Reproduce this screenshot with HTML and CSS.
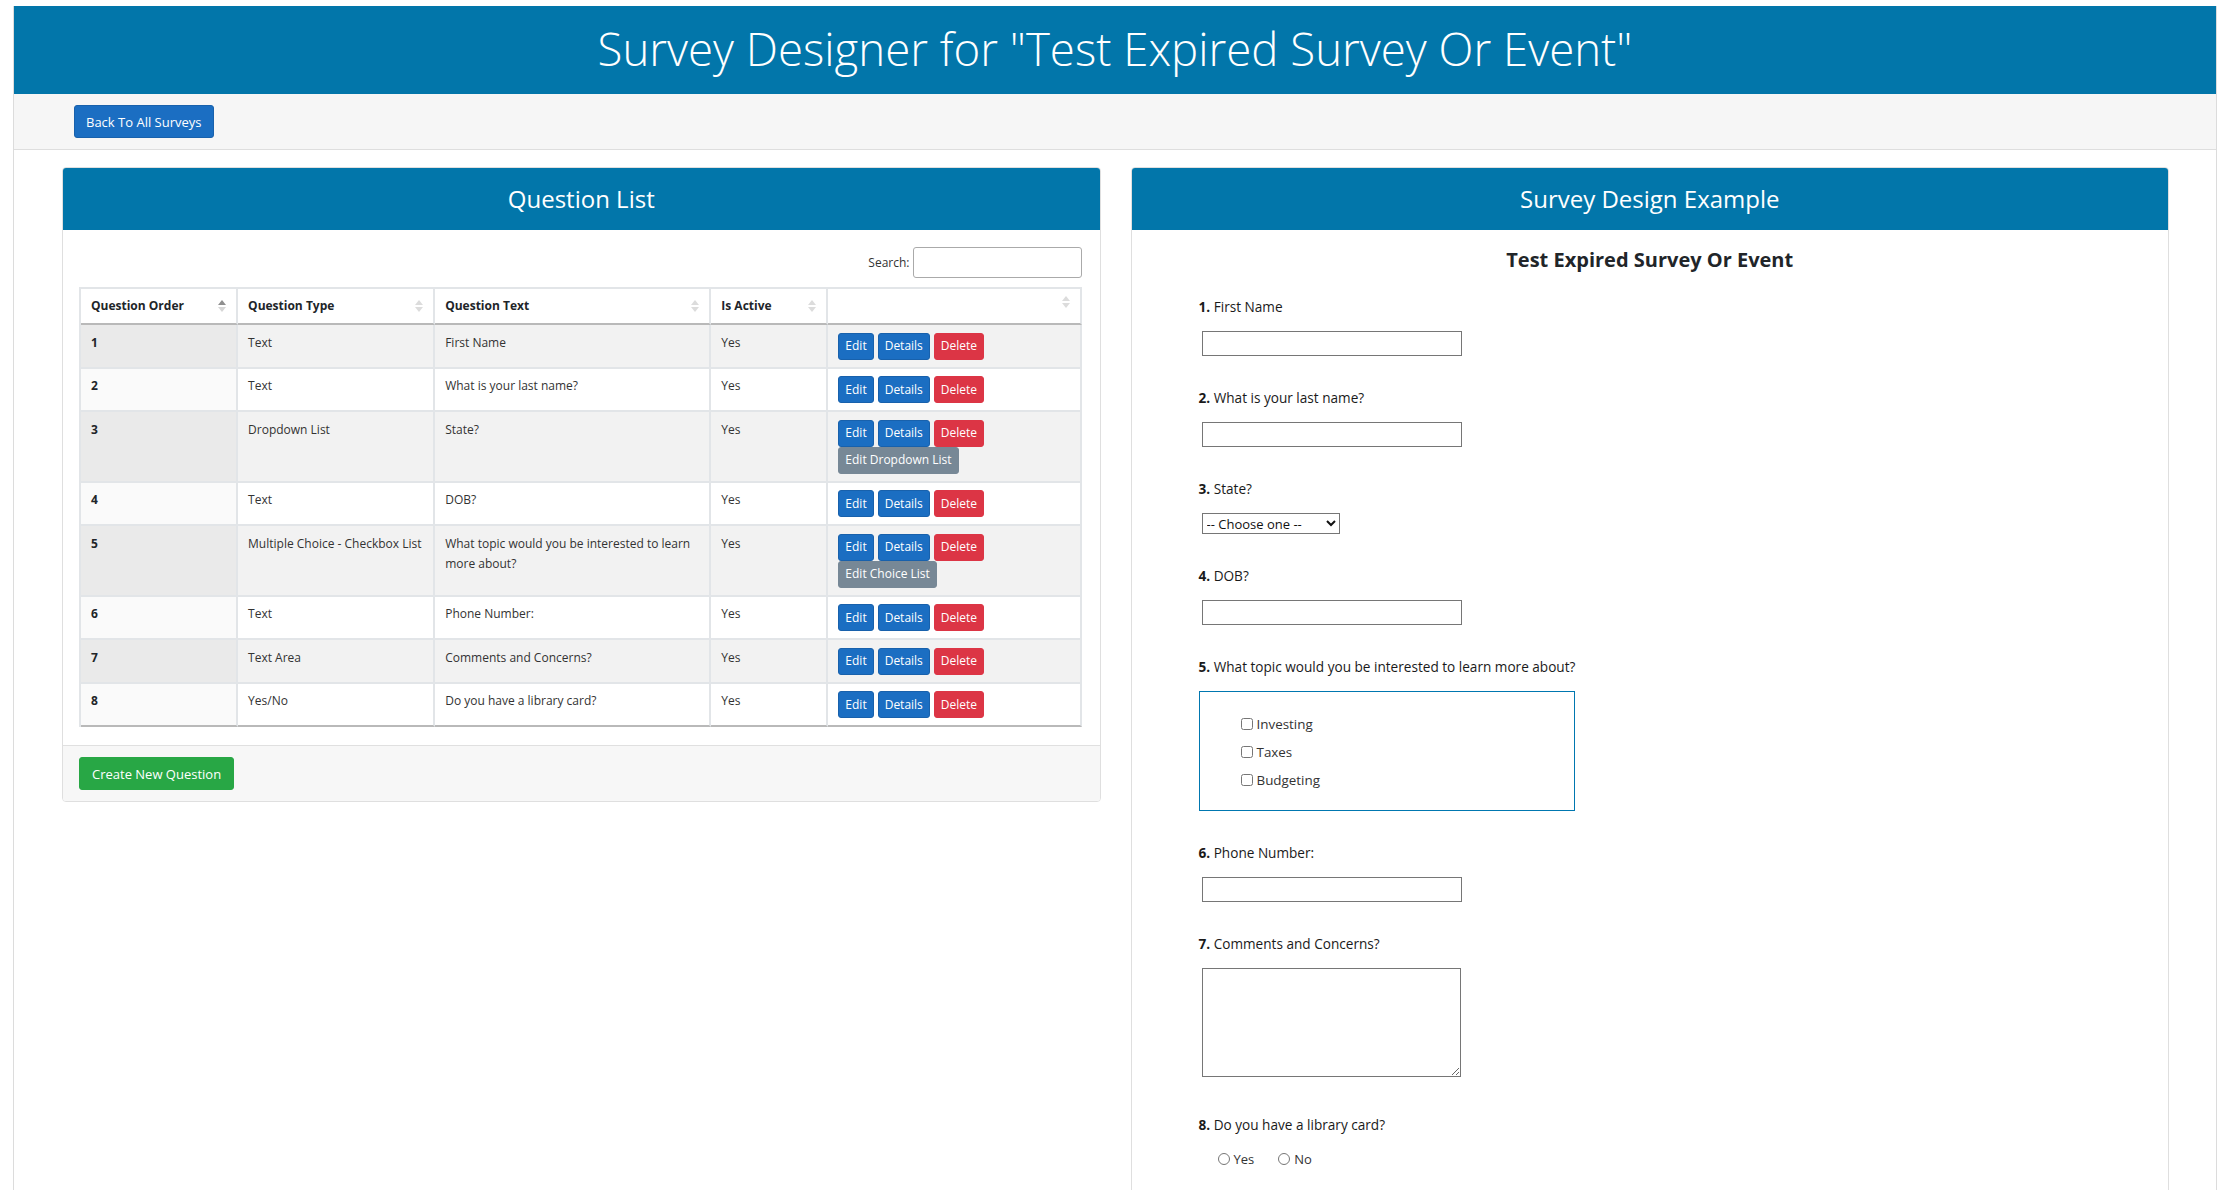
FILE: index.html
```html
<!DOCTYPE html>
<html lang="en">
<head>
<meta charset="utf-8">
<title>Survey Designer</title>
<link rel="stylesheet" href="styles.css">
</head>
<body>
<div class="frame">
  <header class="banner">
    <h1>Survey Designer for "Test Expired Survey Or Event"</h1>
  </header>
  <div class="toolbar">
    <a class="btn btn-primary btn-back" href="#">Back To All Surveys</a>
  </div>
  <main class="panels">
    <section class="panel">
      <div class="panel-head"><h2>Question List</h2></div>
      <div class="panel-body">
        <div class="search"><label for="search">Search:</label><input id="search" type="text"></div>
        <table class="qtable">
          <thead>
            <tr>
              <th class="c1"><div class="th-inner"><span>Question Order</span><svg class="sort" width="8" height="12" viewBox="0 0 8 12"><path d="M4 0 L8 5 H0 Z" fill="#8f8f8f"/><path d="M4 12 L8 7 H0 Z" fill="#d6d6d6"/></svg></div></th>
              <th class="c2"><div class="th-inner"><span>Question Type</span><svg class="sort" width="8" height="12" viewBox="0 0 8 12"><path d="M4 0 L8 5 H0 Z" fill="#dcdcdc"/><path d="M4 12 L8 7 H0 Z" fill="#dcdcdc"/></svg></div></th>
              <th class="c3"><div class="th-inner"><span>Question Text</span><svg class="sort" width="8" height="12" viewBox="0 0 8 12"><path d="M4 0 L8 5 H0 Z" fill="#dcdcdc"/><path d="M4 12 L8 7 H0 Z" fill="#dcdcdc"/></svg></div></th>
              <th class="c4"><div class="th-inner"><span>Is Active</span><svg class="sort" width="8" height="12" viewBox="0 0 8 12"><path d="M4 0 L8 5 H0 Z" fill="#dcdcdc"/><path d="M4 12 L8 7 H0 Z" fill="#dcdcdc"/></svg></div></th>
              <th class="c5"><div class="th-inner"><span></span><svg class="sort" width="8" height="12" viewBox="0 0 8 12"><path d="M4 0 L8 5 H0 Z" fill="#dcdcdc"/><path d="M4 12 L8 7 H0 Z" fill="#dcdcdc"/></svg></div></th>
            </tr>
          </thead>
          <tbody>
            <tr>
              <td class="num">1</td><td>Text</td><td>First Name</td><td>Yes</td>
              <td><div class="actions"><a class="btn btn-primary btn-sm" href="#">Edit</a><a class="btn btn-primary btn-sm" href="#">Details</a><a class="btn btn-danger btn-sm" href="#">Delete</a></div></td>
            </tr>
            <tr>
              <td class="num">2</td><td>Text</td><td>What is your last name?</td><td>Yes</td>
              <td><div class="actions"><a class="btn btn-primary btn-sm" href="#">Edit</a><a class="btn btn-primary btn-sm" href="#">Details</a><a class="btn btn-danger btn-sm" href="#">Delete</a></div></td>
            </tr>
            <tr>
              <td class="num">3</td><td>Dropdown List</td><td>State?</td><td>Yes</td>
              <td><div class="actions"><a class="btn btn-primary btn-sm" href="#">Edit</a><a class="btn btn-primary btn-sm" href="#">Details</a><a class="btn btn-danger btn-sm" href="#">Delete</a></div><a class="btn btn-secondary btn-sm" href="#">Edit Dropdown List</a></td>
            </tr>
            <tr>
              <td class="num">4</td><td>Text</td><td>DOB?</td><td>Yes</td>
              <td><div class="actions"><a class="btn btn-primary btn-sm" href="#">Edit</a><a class="btn btn-primary btn-sm" href="#">Details</a><a class="btn btn-danger btn-sm" href="#">Delete</a></div></td>
            </tr>
            <tr>
              <td class="num">5</td><td>Multiple Choice - Checkbox List</td><td>What topic would you be interested to learn more about?</td><td>Yes</td>
              <td><div class="actions"><a class="btn btn-primary btn-sm" href="#">Edit</a><a class="btn btn-primary btn-sm" href="#">Details</a><a class="btn btn-danger btn-sm" href="#">Delete</a></div><a class="btn btn-secondary btn-sm" href="#">Edit Choice List</a></td>
            </tr>
            <tr>
              <td class="num">6</td><td>Text</td><td>Phone Number:</td><td>Yes</td>
              <td><div class="actions"><a class="btn btn-primary btn-sm" href="#">Edit</a><a class="btn btn-primary btn-sm" href="#">Details</a><a class="btn btn-danger btn-sm" href="#">Delete</a></div></td>
            </tr>
            <tr>
              <td class="num">7</td><td>Text Area</td><td>Comments and Concerns?</td><td>Yes</td>
              <td><div class="actions"><a class="btn btn-primary btn-sm" href="#">Edit</a><a class="btn btn-primary btn-sm" href="#">Details</a><a class="btn btn-danger btn-sm" href="#">Delete</a></div></td>
            </tr>
            <tr>
              <td class="num">8</td><td>Yes/No</td><td>Do you have a library card?</td><td>Yes</td>
              <td><div class="actions"><a class="btn btn-primary btn-sm" href="#">Edit</a><a class="btn btn-primary btn-sm" href="#">Details</a><a class="btn btn-danger btn-sm" href="#">Delete</a></div></td>
            </tr>
          </tbody>
        </table>
      </div>
      <div class="panel-foot">
        <a class="btn btn-success btn-create" href="#">Create New Question</a>
      </div>
    </section>

    <section class="panel">
      <div class="panel-head"><h2>Survey Design Example</h2></div>
      <div class="survey">
        <h3 class="survey-title">Test Expired Survey Or Event</h3>
        <div class="q-list">
          <div class="q">
            <div class="q-label"><b>1.</b> First Name</div>
            <input class="q-input" type="text">
          </div>
          <div class="q">
            <div class="q-label"><b>2.</b> What is your last name?</div>
            <input class="q-input" type="text">
          </div>
          <div class="q">
            <div class="q-label"><b>3.</b> State?</div>
            <select class="q-select"><option>-- Choose one --</option></select>
          </div>
          <div class="q">
            <div class="q-label"><b>4.</b> DOB?</div>
            <input class="q-input" type="text">
          </div>
          <div class="q q-choice">
            <div class="q-label"><b>5.</b> What topic would you be interested to learn more about?</div>
            <div class="choice-box">
              <label class="choice"><input type="checkbox"><span>Investing</span></label>
              <label class="choice"><input type="checkbox"><span>Taxes</span></label>
              <label class="choice"><input type="checkbox"><span>Budgeting</span></label>
            </div>
          </div>
          <div class="q">
            <div class="q-label"><b>6.</b> Phone Number:</div>
            <input class="q-input" type="text">
          </div>
          <div class="q q-area">
            <div class="q-label"><b>7.</b> Comments and Concerns?</div>
            <textarea class="q-textarea"></textarea>
          </div>
          <div class="q">
            <div class="q-label"><b>8.</b> Do you have a library card?</div>
            <div class="radios">
              <label class="radio"><input type="radio" name="lib"><span>Yes</span></label>
              <label class="radio"><input type="radio" name="lib"><span>No</span></label>
            </div>
          </div>
        </div>
      </div>
    </section>
  </main>
</div>
</body>
</html>
```
FILE: styles.css
```css
* { box-sizing: border-box; }
html, body { margin: 0; padding: 0; background: #fff; }
body {
  font-family: "Open Sans", "Noto Sans", "Liberation Sans", sans-serif;
  font-size: 13px;
  color: #212529;
}

.frame {
  margin: 6px 3px 0 13px;
  border-left: 1px solid #dcdcdc;
  border-right: 1px solid #dcdcdc;
  min-height: 1184px;
}

.banner {
  background: #0276aa;
  height: 88px;
  display: flex;
  align-items: center;
  justify-content: center;
}
.banner h1 {
  margin: 0;
  color: #fff;
  font-size: 45.6px;
  font-weight: 300;
  line-height: 1;
  padding-bottom: 2px;
}

.toolbar {
  background: #f6f6f6;
  border-bottom: 1px solid #dedede;
  height: 56px;
  padding: 11px 60px;
}

.btn {
  display: inline-flex;
  align-items: center;
  justify-content: center;
  color: #fff;
  text-decoration: none;
  border: 1px solid transparent;
  border-radius: 3px;
  white-space: nowrap;
}
.btn-primary { background: #1b6ec2; border-color: #1861ac; }
.btn-danger { background: #dc3545; border-color: #dc3545; }
.btn-secondary { background: #778896; border-color: #778896; }
.btn-success { background: #28a745; border-color: #28a745; }

.btn-back { height: 33px; padding: 0 11px; font-size: 13px; }
.btn-create { height: 33px; padding: 0 12px; font-size: 13px; }
.btn-sm { height: 27px; padding: 0 6px; font-size: 12px; }

.panels {
  display: grid;
  grid-template-columns: 1fr 1fr;
  gap: 30px;
  padding: 17px 47px 0 48px;
  align-items: start;
}

.panel {
  border: 1px solid #dfdfdf;
  border-radius: 4px;
  overflow: hidden;
  background: #fff;
}
.panel-head {
  background: #0276aa;
  height: 62px;
  display: flex;
  align-items: center;
  justify-content: center;
}
.panel-head h2 {
  margin: 0;
  color: #fff;
  font-size: 24px;
  font-weight: 400;
  line-height: 1;
}

.panel-body { padding: 17px 18px 18px 16px; }

.search {
  display: flex;
  justify-content: flex-end;
  align-items: center;
  gap: 3px;
  margin-bottom: 9px;
}
.search label { font-size: 12px; color: #333; }
.search input {
  width: 169px;
  height: 31px;
  border: 1px solid #aaa;
  border-radius: 3px;
}

.qtable {
  width: 100%;
  border-collapse: separate;
  border-spacing: 0;
  table-layout: fixed;
  border-top: 2px solid #e2e5e8;
  border-left: 2px solid #e2e5e8;
  font-size: 12px;
  color: #333;
}
.qtable th, .qtable td {
  border-right: 2px solid #e2e5e8;
  border-bottom: 2px solid #e2e5e8;
  padding: 7.5px 8px 7px 10px;
  text-align: left;
  vertical-align: top;
  line-height: 20px;
}
.qtable th {
  padding-top: 7px;
  padding-bottom: 7px;
  padding-right: 10px;
  border-bottom-color: #b9b9b9;
  font-weight: 700;
  color: #212529;
  background: #fff;
}
.qtable th.c1 { width: 157px; }
.qtable th.c2 { width: 197px; }
.qtable th.c3 { width: 276px; }
.qtable th.c4 { width: 117px; }
.qtable th.c5 { width: 253px; }

.th-inner {
  display: flex;
  align-items: center;
  justify-content: space-between;
}
.sort { flex: none; }

.qtable tbody tr:nth-child(odd) td { background: #f2f2f2; }
.qtable tbody tr:nth-child(even) td { background: #fff; }
.qtable tbody tr:nth-child(odd) td.num { background: #eaeaea; }
.qtable tbody tr:nth-child(even) td.num { background: #fafafa; }
.qtable tbody tr:last-child td { border-bottom-color: #b9b9b9; }
.qtable td.num { font-weight: 700; color: #212529; }

.actions { display: flex; gap: 4px; }

.panel-foot {
  background: #f7f7f7;
  border-top: 1px solid #e0e0e0;
  padding: 11px 16px;
}

.survey { padding: 16px 0 60px; }
.survey-title {
  margin: 0 0 23px;
  text-align: center;
  font-size: 20px;
  font-weight: 700;
  line-height: 28px;
  color: #212529;
}
.q-list { padding-left: 67px; }
.q { margin-bottom: 32px; }
.q-area { margin-bottom: 38px; }
.q-label {
  font-size: 13.6px;
  line-height: 20px;
  color: #1a1a1a;
  margin-bottom: 14px;
}
.q-label b { font-weight: 700; }

.q-input {
  display: block;
  margin: 0 0 0 3px;
  width: 260px;
  height: 25px;
  border: 1px solid #767676;
  border-radius: 0;
  padding: 1px 2px;
}
.q-select {
  display: block;
  margin: 0 0 0 3px;
  width: 138px;
  height: 21px;
  font-family: inherit;
  font-size: 13px;
  color: #111;
  border: 1px solid #767676;
  border-radius: 0;
  background: #fff;
}
.q-textarea {
  display: block;
  margin: 0 0 0 3px;
  width: 259px;
  height: 109px;
  border: 1px solid #767676;
  border-radius: 0;
}

.q-choice { width: max-content; }
.choice-box {
  border: 1px solid #0077b0;
  padding: 18px 0 16px 38px;
}
.choice {
  display: flex;
  align-items: center;
  height: 28px;
  font-size: 13.4px;
  color: #333;
}
.choice input { margin: 0 4px 0 3px; width: 12px; height: 12px; }

.radios {
  display: flex;
  align-items: center;
  height: 20px;
  padding-left: 19px;
  font-size: 13px;
  color: #333;
}
.radio { display: flex; align-items: center; margin-right: 24px; }
.radio input { margin: 0 4px 0 0; width: 12px; height: 12px; }
```
